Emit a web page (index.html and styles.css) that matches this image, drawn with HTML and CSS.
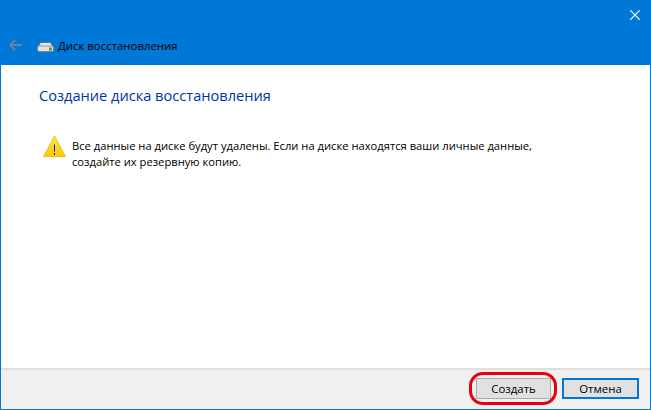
FILE: index.html
```html
<!DOCTYPE html>
<html lang="ru">
<head>
<meta charset="utf-8">
<title>Диск восстановления</title>
<link rel="stylesheet" href="styles.css">
</head>
<body>
<div class="window">
  <header class="header">
    <div class="titlebar">
      <svg class="close" width="10" height="10" viewBox="0 0 10 10"><path d="M.3.3l9.400 9.400M9.700.3L.3 9.700" stroke="#fff" stroke-width="1.200" fill="none"/></svg>
    </div>
    <div class="nav">
      <svg class="back" width="13" height="12" viewBox="0 0 13 12"><path d="M6.300.8L1.200 6l5.100 5.200M1.200 6H13" stroke="#6d8199" stroke-width="1.800" fill="none"/></svg>
      <svg class="drive" width="17" height="10" viewBox="0 0 17 10">
        <path d="M3.500.5h10l3 5H.5z" fill="#e6e6e6" stroke="#5f5f5f" stroke-width=".7"/>
        <rect x=".5" y="4" width="16" height="5.500" rx="1.500" fill="#e2e2e2" stroke="#767676" stroke-width=".7"/>
        <rect x="12" y="5.500" width="3" height="3" fill="#4f9a3a"/>
      </svg>
      <span class="nav-title">Диск восстановления</span>
    </div>
  </header>
  <main class="content">
    <h1 class="heading">Создание диска восстановления</h1>
    <div class="warning">
      <svg class="warn-icon" width="23" height="22" viewBox="0 0 23 22">
        <defs>
          <linearGradient id="warn-fill" x1="0" y1="0" x2="0" y2="1">
            <stop offset="0" stop-color="#fde55a"/>
            <stop offset="1" stop-color="#fcc800"/>
          </linearGradient>
        </defs>
        <path d="M11.500.8L22.500 21.500H.5z" fill="url(#warn-fill)" stroke="#efb800" stroke-width=".8" stroke-linejoin="round"/>
        <path d="M11.500 9.500v7" stroke="#222" stroke-width="1"/>
        <path d="M11.500 18v2" stroke="#222" stroke-width="1"/>
      </svg>
      <p class="warn-text">Все данные на диске будут удалены. Если на диске находятся ваши личные данные,<br>создайте их резервную копию.</p>
    </div>
  </main>
  <footer class="footer">
    <div class="create-wrap">
      <button class="btn">Создать</button>
      <span class="ring"></span>
    </div>
    <button class="btn btn-default">Отмена</button>
  </footer>
</div>
</body>
</html>
```
FILE: styles.css
```css
* { box-sizing: border-box; }
html, body { margin: 0; padding: 0; }
body {
  width: 651px;
  height: 410px;
  overflow: hidden;
  font-family: "Open Sans", "Noto Sans", sans-serif;
}
.window {
  width: 651px;
  height: 410px;
  display: flex;
  flex-direction: column;
  background: #fff;
  border: 1px solid #0078d7;
  border-top: 0;
}
.header {
  height: 65px;
  margin: 0 -1px;
  background: #0078d7;
  display: flex;
  flex-direction: column;
  flex: none;
}
.titlebar {
  height: 34px;
  display: flex;
  justify-content: flex-end;
  padding: 10px 11px 0 0;
  flex: none;
}
.close { display: block; }
.nav {
  display: flex;
  align-items: center;
  height: 23px;
  padding-left: 9px;
}
.back { flex: none; margin-right: 15px; margin-top: -1px; }
.drive { flex: none; margin-right: 4px; margin-top: 2px; }
.nav-title { font-size: 11.400px; color: #000; }
.content {
  flex: 1;
  padding: 19px 0 0 38px;
}
.heading {
  margin: 0;
  font-size: 14.600px;
  font-weight: 400;
  line-height: 22px;
  color: #0033a6;
}
.warning {
  display: flex;
  align-items: flex-start;
  margin-top: 29px;
  margin-left: 4px;
}
.warn-icon { flex: none; margin: 0 6px 0 0; }
.warn-text {
  margin: 0;
  padding-top: 3px;
  font-size: 11.200px;
  line-height: 16px;
  color: #000;
  white-space: nowrap;
}
.footer {
  height: 41px;
  flex: none;
  background: #f0f0f0;
  border-top: 2px solid #dfdfdf;
  display: flex;
  justify-content: flex-end;
  align-items: flex-start;
  gap: 11px;
  padding: 8px 11px 0 0;
}
.create-wrap { position: relative; display: flex; }
.btn {
  width: 75px;
  height: 21px;
  padding: 0;
  background: #e1e1e1;
  border: 1px solid #adadad;
  font-family: inherit;
  font-size: 11.400px;
  color: #000;
}
.btn-default { width: 77px; border: 2px solid #0078d7; }
.ring {
  position: absolute;
  left: -7px;
  top: -6px;
  width: 88px;
  height: 33px;
  border: 3px solid #e8000f;
  border-radius: 14px;
}
```
